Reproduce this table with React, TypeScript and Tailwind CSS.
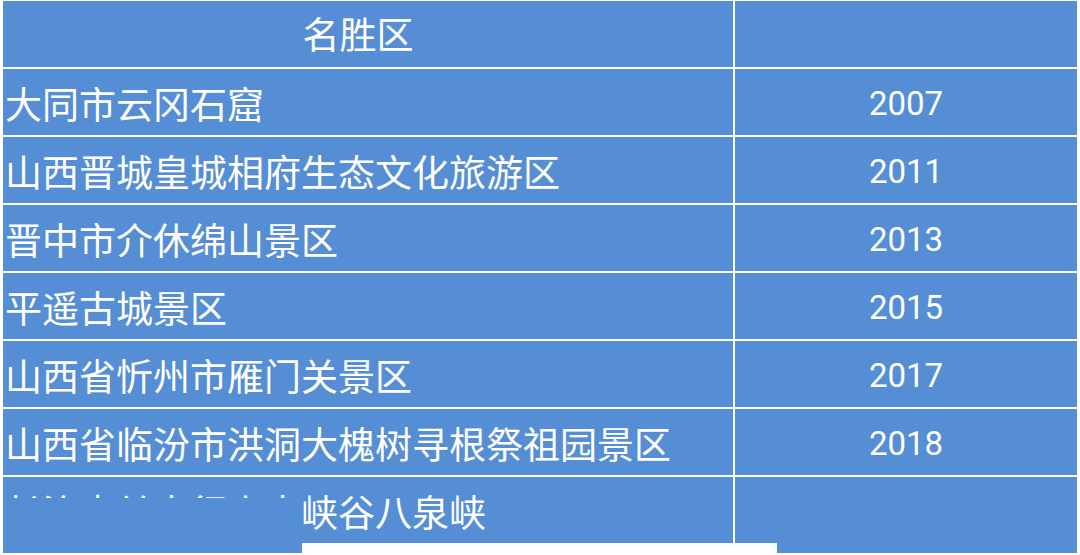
import React from "react";

const rows: { name: string; year: string }[] = [
  { name: "大同市云冈石窟", year: "2007" },
  { name: "山西晋城皇城相府生态文化旅游区", year: "2011" },
  { name: "晋中市介休绵山景区", year: "2013" },
  { name: "平遥古城景区", year: "2015" },
  { name: "山西省忻州市雁门关景区", year: "2017" },
  { name: "山西省临汾市洪洞大槐树寻根祭祖园景区", year: "2018" },
  { name: "长治壶关太行山大峡谷八泉峡", year: "2019" },
];

const cjk = "font-['Noto_Sans_CJK_SC',sans-serif]";
const num = "font-['Roboto','Liberation_Sans',sans-serif]";

export default function App() {
  return (
    <div className="w-[1080px] h-[555px] bg-white pl-[3px] pt-[1px] overflow-hidden">
      <div className="relative w-[1074px] bg-[#558ed5] text-white">
        {/* header */}
        <div className="flex h-[68px] border-b-2 border-white">
          <div className={`w-[730px] flex items-center justify-center pr-[20px] text-[37px] ${cjk}`}>
            名胜区
          </div>
          <div className="flex-1 border-l-2 border-white" />
        </div>
        {rows.map((r) => (
          <div key={r.name} className="flex h-[68px] border-b-2 border-white">
            <div className={`w-[730px] flex items-center pl-[2px] pt-[2px] text-[37px] leading-none whitespace-nowrap ${cjk}`}>
              {r.name}
            </div>
            <div className={`flex-1 border-l-2 border-white flex items-center justify-center pt-[4px] text-[33px] ${num}`}>
              {r.year}
            </div>
          </div>
        ))}
        {/* cover patches over the last row */}
        <div className="absolute left-0 top-[497px] w-[299px] h-[55px] bg-[#558ed5]" />
        <div className="absolute left-[774px] top-[478px] w-[300px] h-[74px] bg-[#558ed5]" />
      </div>
    </div>
  );
}
